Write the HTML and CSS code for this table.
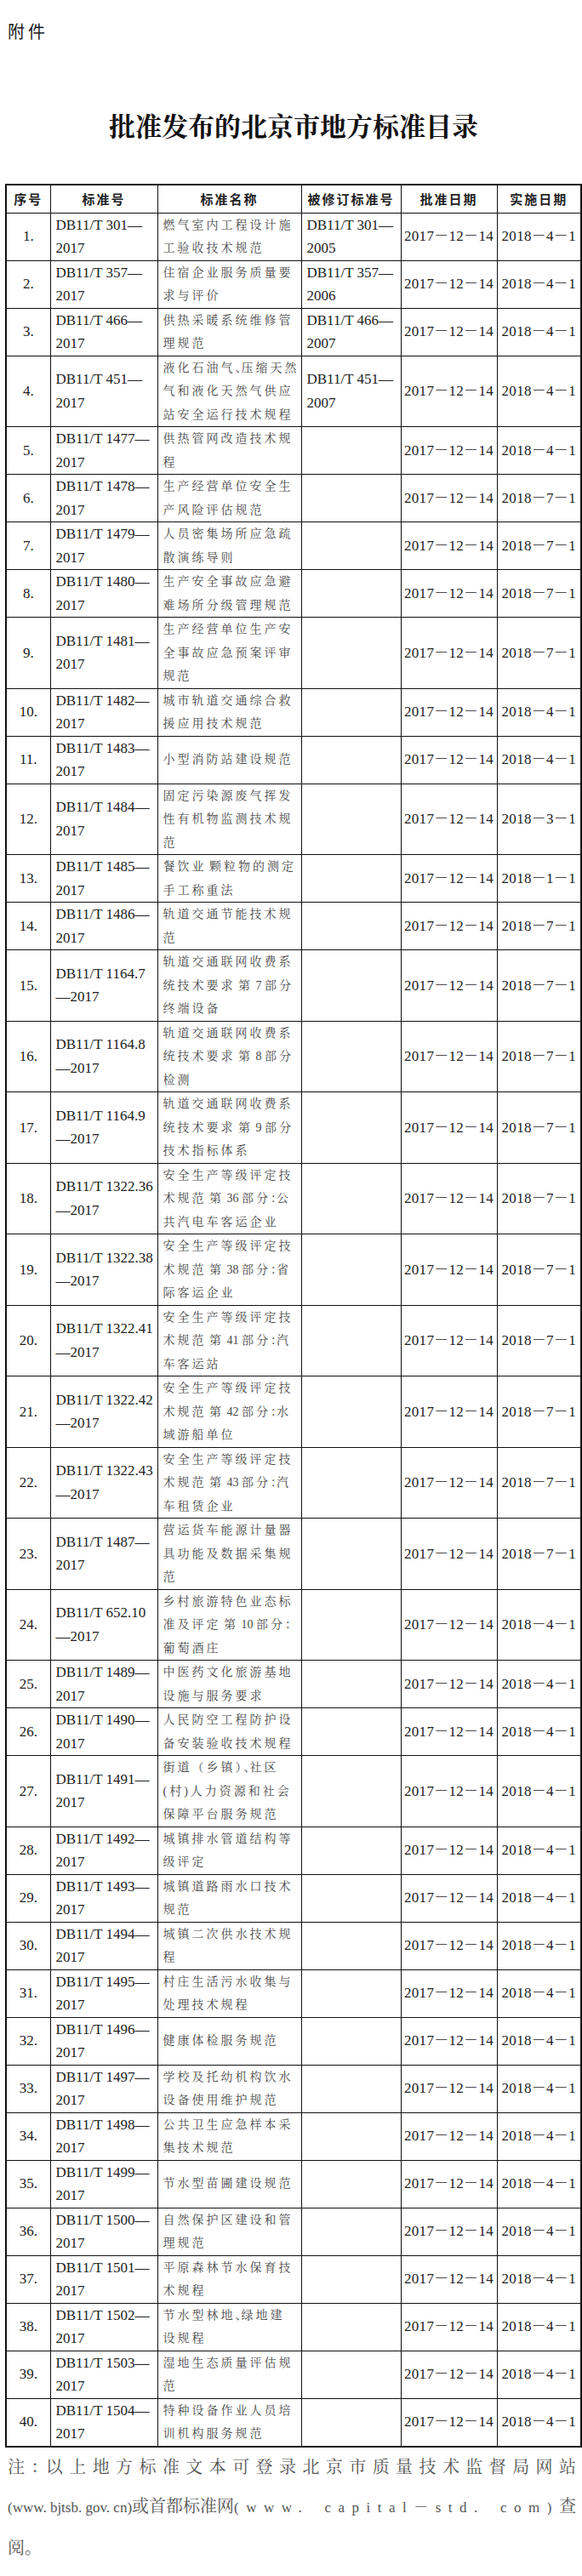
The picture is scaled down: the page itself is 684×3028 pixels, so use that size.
FILE: index.html
```html
<!DOCTYPE html>
<html lang="zh-CN">
<head>
<meta charset="utf-8">
<title>批准发布的北京市地方标准目录</title>
<link rel="stylesheet" href="styles.css">
</head>
<body>
<div class="attach">附件</div>
<h1 class="title">批准发布的北京市地方标准目录</h1>
<table class="list">
<thead>
<tr><th class="c1">序号</th><th class="c2">标准号</th><th class="c3">标准名称</th><th class="c4">被修订标准号</th><th class="c5">批准日期</th><th class="c6">实施日期</th></tr>
</thead>
<tbody>
<tr><td class="no">1.</td><td class="code">DB11/T 301—<br>2017</td><td class="name">燃气室内工程设计施<br>工验收技术规范</td><td class="code">DB11/T 301—<br>2005</td><td class="date">2017－12－14</td><td class="date">2018－4－1</td></tr>
<tr><td class="no">2.</td><td class="code">DB11/T 357—<br>2017</td><td class="name">住宿企业服务质量要<br>求与评价</td><td class="code">DB11/T 357—<br>2006</td><td class="date">2017－12－14</td><td class="date">2018－4－1</td></tr>
<tr><td class="no">3.</td><td class="code">DB11/T 466—<br>2017</td><td class="name">供热采暖系统维修管<br>理规范</td><td class="code">DB11/T 466—<br>2007</td><td class="date">2017－12－14</td><td class="date">2018－4－1</td></tr>
<tr><td class="no">4.</td><td class="code">DB11/T 451—<br>2017</td><td class="name">液化石油气<span class="p">、</span>压缩天然<br>气和液化天然气供应<br>站安全运行技术规程</td><td class="code">DB11/T 451—<br>2007</td><td class="date">2017－12－14</td><td class="date">2018－4－1</td></tr>
<tr><td class="no">5.</td><td class="code">DB11/T 1477—<br>2017</td><td class="name">供热管网改造技术规<br>程</td><td class="code"></td><td class="date">2017－12－14</td><td class="date">2018－4－1</td></tr>
<tr><td class="no">6.</td><td class="code">DB11/T 1478—<br>2017</td><td class="name">生产经营单位安全生<br>产风险评估规范</td><td class="code"></td><td class="date">2017－12－14</td><td class="date">2018－7－1</td></tr>
<tr><td class="no">7.</td><td class="code">DB11/T 1479—<br>2017</td><td class="name">人员密集场所应急疏<br>散演练导则</td><td class="code"></td><td class="date">2017－12－14</td><td class="date">2018－7－1</td></tr>
<tr><td class="no">8.</td><td class="code">DB11/T 1480—<br>2017</td><td class="name">生产安全事故应急避<br>难场所分级管理规范</td><td class="code"></td><td class="date">2017－12－14</td><td class="date">2018－7－1</td></tr>
<tr><td class="no">9.</td><td class="code">DB11/T 1481—<br>2017</td><td class="name">生产经营单位生产安<br>全事故应急预案评审<br>规范</td><td class="code"></td><td class="date">2017－12－14</td><td class="date">2018－7－1</td></tr>
<tr><td class="no">10.</td><td class="code">DB11/T 1482—<br>2017</td><td class="name">城市轨道交通综合救<br>援应用技术规范</td><td class="code"></td><td class="date">2017－12－14</td><td class="date">2018－4－1</td></tr>
<tr><td class="no">11.</td><td class="code">DB11/T 1483—<br>2017</td><td class="name">小型消防站建设规范</td><td class="code"></td><td class="date">2017－12－14</td><td class="date">2018－4－1</td></tr>
<tr><td class="no">12.</td><td class="code">DB11/T 1484—<br>2017</td><td class="name">固定污染源废气挥发<br>性有机物监测技术规<br>范</td><td class="code"></td><td class="date">2017－12－14</td><td class="date">2018－3－1</td></tr>
<tr><td class="no">13.</td><td class="code">DB11/T 1485—<br>2017</td><td class="name">餐饮业<span class="n"> </span>颗粒物的测定<br>手工称重法</td><td class="code"></td><td class="date">2017－12－14</td><td class="date">2018－1－1</td></tr>
<tr><td class="no">14.</td><td class="code">DB11/T 1486—<br>2017</td><td class="name">轨道交通节能技术规<br>范</td><td class="code"></td><td class="date">2017－12－14</td><td class="date">2018－7－1</td></tr>
<tr><td class="no">15.</td><td class="code">DB11/T 1164.7<br>—2017</td><td class="name">轨道交通联网收费系<br>统技术要求<span class="n"> </span>第<span class="n"> 7 </span>部分<br>终端设备</td><td class="code"></td><td class="date">2017－12－14</td><td class="date">2018－7－1</td></tr>
<tr><td class="no">16.</td><td class="code">DB11/T 1164.8<br>—2017</td><td class="name">轨道交通联网收费系<br>统技术要求<span class="n"> </span>第<span class="n"> 8 </span>部分<br>检测</td><td class="code"></td><td class="date">2017－12－14</td><td class="date">2018－7－1</td></tr>
<tr><td class="no">17.</td><td class="code">DB11/T 1164.9<br>—2017</td><td class="name">轨道交通联网收费系<br>统技术要求<span class="n"> </span>第<span class="n"> 9 </span>部分<br>技术指标体系</td><td class="code"></td><td class="date">2017－12－14</td><td class="date">2018－7－1</td></tr>
<tr><td class="no">18.</td><td class="code">DB11/T 1322.36<br>—2017</td><td class="name">安全生产等级评定技<br>术规范<span class="n"> </span>第<span class="n"> 36 </span>部分<span class="p">：</span>公<br>共汽电车客运企业</td><td class="code"></td><td class="date">2017－12－14</td><td class="date">2018－7－1</td></tr>
<tr><td class="no">19.</td><td class="code">DB11/T 1322.38<br>—2017</td><td class="name">安全生产等级评定技<br>术规范<span class="n"> </span>第<span class="n"> 38 </span>部分<span class="p">：</span>省<br>际客运企业</td><td class="code"></td><td class="date">2017－12－14</td><td class="date">2018－7－1</td></tr>
<tr><td class="no">20.</td><td class="code">DB11/T 1322.41<br>—2017</td><td class="name">安全生产等级评定技<br>术规范<span class="n"> </span>第<span class="n"> 41 </span>部分<span class="p">：</span>汽<br>车客运站</td><td class="code"></td><td class="date">2017－12－14</td><td class="date">2018－7－1</td></tr>
<tr><td class="no">21.</td><td class="code">DB11/T 1322.42<br>—2017</td><td class="name">安全生产等级评定技<br>术规范<span class="n"> </span>第<span class="n"> 42 </span>部分<span class="p">：</span>水<br>域游船单位</td><td class="code"></td><td class="date">2017－12－14</td><td class="date">2018－7－1</td></tr>
<tr><td class="no">22.</td><td class="code">DB11/T 1322.43<br>—2017</td><td class="name">安全生产等级评定技<br>术规范<span class="n"> </span>第<span class="n"> 43 </span>部分<span class="p">：</span>汽<br>车租赁企业</td><td class="code"></td><td class="date">2017－12－14</td><td class="date">2018－7－1</td></tr>
<tr><td class="no">23.</td><td class="code">DB11/T 1487—<br>2017</td><td class="name">营运货车能源计量器<br>具功能及数据采集规<br>范</td><td class="code"></td><td class="date">2017－12－14</td><td class="date">2018－7－1</td></tr>
<tr><td class="no">24.</td><td class="code">DB11/T 652.10<br>—2017</td><td class="name">乡村旅游特色业态标<br>准及评定<span class="n"> </span>第<span class="n"> 10 </span>部分<span class="p">：</span><br>葡萄酒庄</td><td class="code"></td><td class="date">2017－12－14</td><td class="date">2018－4－1</td></tr>
<tr><td class="no">25.</td><td class="code">DB11/T 1489—<br>2017</td><td class="name">中医药文化旅游基地<br>设施与服务要求</td><td class="code"></td><td class="date">2017－12－14</td><td class="date">2018－4－1</td></tr>
<tr><td class="no">26.</td><td class="code">DB11/T 1490—<br>2017</td><td class="name">人民防空工程防护设<br>备安装验收技术规程</td><td class="code"></td><td class="date">2017－12－14</td><td class="date">2018－4－1</td></tr>
<tr><td class="no">27.</td><td class="code">DB11/T 1491—<br>2017</td><td class="name">街道（乡镇）<span class="p">、</span>社区<br>(村)人力资源和社会<br>保障平台服务规范</td><td class="code"></td><td class="date">2017－12－14</td><td class="date">2018－4－1</td></tr>
<tr><td class="no">28.</td><td class="code">DB11/T 1492—<br>2017</td><td class="name">城镇排水管道结构等<br>级评定</td><td class="code"></td><td class="date">2017－12－14</td><td class="date">2018－4－1</td></tr>
<tr><td class="no">29.</td><td class="code">DB11/T 1493—<br>2017</td><td class="name">城镇道路雨水口技术<br>规范</td><td class="code"></td><td class="date">2017－12－14</td><td class="date">2018－4－1</td></tr>
<tr><td class="no">30.</td><td class="code">DB11/T 1494—<br>2017</td><td class="name">城镇二次供水技术规<br>程</td><td class="code"></td><td class="date">2017－12－14</td><td class="date">2018－4－1</td></tr>
<tr><td class="no">31.</td><td class="code">DB11/T 1495—<br>2017</td><td class="name">村庄生活污水收集与<br>处理技术规程</td><td class="code"></td><td class="date">2017－12－14</td><td class="date">2018－4－1</td></tr>
<tr><td class="no">32.</td><td class="code">DB11/T 1496—<br>2017</td><td class="name">健康体检服务规范</td><td class="code"></td><td class="date">2017－12－14</td><td class="date">2018－4－1</td></tr>
<tr><td class="no">33.</td><td class="code">DB11/T 1497—<br>2017</td><td class="name">学校及托幼机构饮水<br>设备使用维护规范</td><td class="code"></td><td class="date">2017－12－14</td><td class="date">2018－4－1</td></tr>
<tr><td class="no">34.</td><td class="code">DB11/T 1498—<br>2017</td><td class="name">公共卫生应急样本采<br>集技术规范</td><td class="code"></td><td class="date">2017－12－14</td><td class="date">2018－4－1</td></tr>
<tr><td class="no">35.</td><td class="code">DB11/T 1499—<br>2017</td><td class="name">节水型苗圃建设规范</td><td class="code"></td><td class="date">2017－12－14</td><td class="date">2018－4－1</td></tr>
<tr><td class="no">36.</td><td class="code">DB11/T 1500—<br>2017</td><td class="name">自然保护区建设和管<br>理规范</td><td class="code"></td><td class="date">2017－12－14</td><td class="date">2018－4－1</td></tr>
<tr><td class="no">37.</td><td class="code">DB11/T 1501—<br>2017</td><td class="name">平原森林节水保育技<br>术规程</td><td class="code"></td><td class="date">2017－12－14</td><td class="date">2018－4－1</td></tr>
<tr><td class="no">38.</td><td class="code">DB11/T 1502—<br>2017</td><td class="name">节水型林地<span class="p">、</span>绿地建<br>设规程</td><td class="code"></td><td class="date">2017－12－14</td><td class="date">2018－4－1</td></tr>
<tr><td class="no">39.</td><td class="code">DB11/T 1503—<br>2017</td><td class="name">湿地生态质量评估规<br>范</td><td class="code"></td><td class="date">2017－12－14</td><td class="date">2018－4－1</td></tr>
<tr><td class="no">40.</td><td class="code">DB11/T 1504—<br>2017</td><td class="name">特种设备作业人员培<br>训机构服务规范</td><td class="code"></td><td class="date">2017－12－14</td><td class="date">2018－4－1</td></tr>
</tbody>
</table>
<div class="note">
<p class="line just">注<span class="p">：</span>以上地方标准文本可登录北京市质量技术监督局网站</p>
<p class="line just"><span class="grp"><span class="lat">(www. bjtsb. gov. cn)</span>或首都标准网</span><span class="wide">(www. capital－std. com)</span><span class="grp">查</span></p>
<p class="line">阅。</p>
</div>
</body>
</html>
```
FILE: styles.css
```css
html, body {
  margin: 0;
  padding: 0;
  background: #ffffff;
}

body {
  width: 684px;
  color: #222;
  font-family: "Liberation Serif", "Noto Serif CJK SC", "Noto Sans CJK SC", serif;
}

.attach {
  margin: 25px 0 0 9px;
  font-family: "Noto Sans CJK SC", sans-serif;
  font-size: 20px;
  line-height: 24px;
  letter-spacing: 4px;
  color: #1a1a1a;
}

.title {
  margin: 78px 0 0 0;
  padding-left: 6px;
  text-align: center;
  font-family: "Noto Serif CJK SC", "Noto Sans CJK SC", serif;
  font-weight: 700;
  font-size: 31px;
  line-height: 40px;
  color: #111;
}

.list {
  margin: 49px 0 0 6px;
  width: 676px;
  table-layout: fixed;
  border-collapse: collapse;
  border: 2px solid #111;
}

.list th,
.list td {
  box-sizing: border-box;
  border: 1px solid #111;
  vertical-align: middle;
  white-space: nowrap;
  overflow: hidden;
}

.c1 { width: 52px; }
.c2 { width: 126px; }
.c3 { width: 169px; }
.c4 { width: 117px; }
.c5 { width: 113px; }
.c6 { width: 99px; }

.list th {
  height: 33px;
  padding: 0;
  font-family: "Noto Sans CJK SC", sans-serif;
  font-weight: 700;
  font-size: 15px;
  line-height: 20px;
  letter-spacing: 2px;
  color: #222;
  text-align: center;
}

.list td {
  padding: 0 1px 0 6px;
  font-size: 17px;
  line-height: 27.5px;
  color: #222;
}

.list td.no {
  padding: 0;
  text-align: center;
}

.list td.name {
  padding: 0 0 0 6px;
  font-size: 14px;
  letter-spacing: 3px;
  color: #4a4a4a;
}

.list td.date {
  padding: 0;
  text-align: center;
  letter-spacing: 0.3px;
}

.p {
  letter-spacing: 0;
  font-feature-settings: "halt";
}

.n {
  letter-spacing: 0;
}

.note {
  padding: 0 7px 0 9px;
  font-size: 20px;
  line-height: 46.7px;
  color: #555;
}

.line {
  margin: 0;
}

.just {
  text-align: justify;
  text-align-last: justify;
}

.grp {
  display: inline-block;
  white-space: nowrap;
}

.lat {
  font-size: 17px;
}

.wide {
  font-size: 17px;
  letter-spacing: 8.5px;
}
```
